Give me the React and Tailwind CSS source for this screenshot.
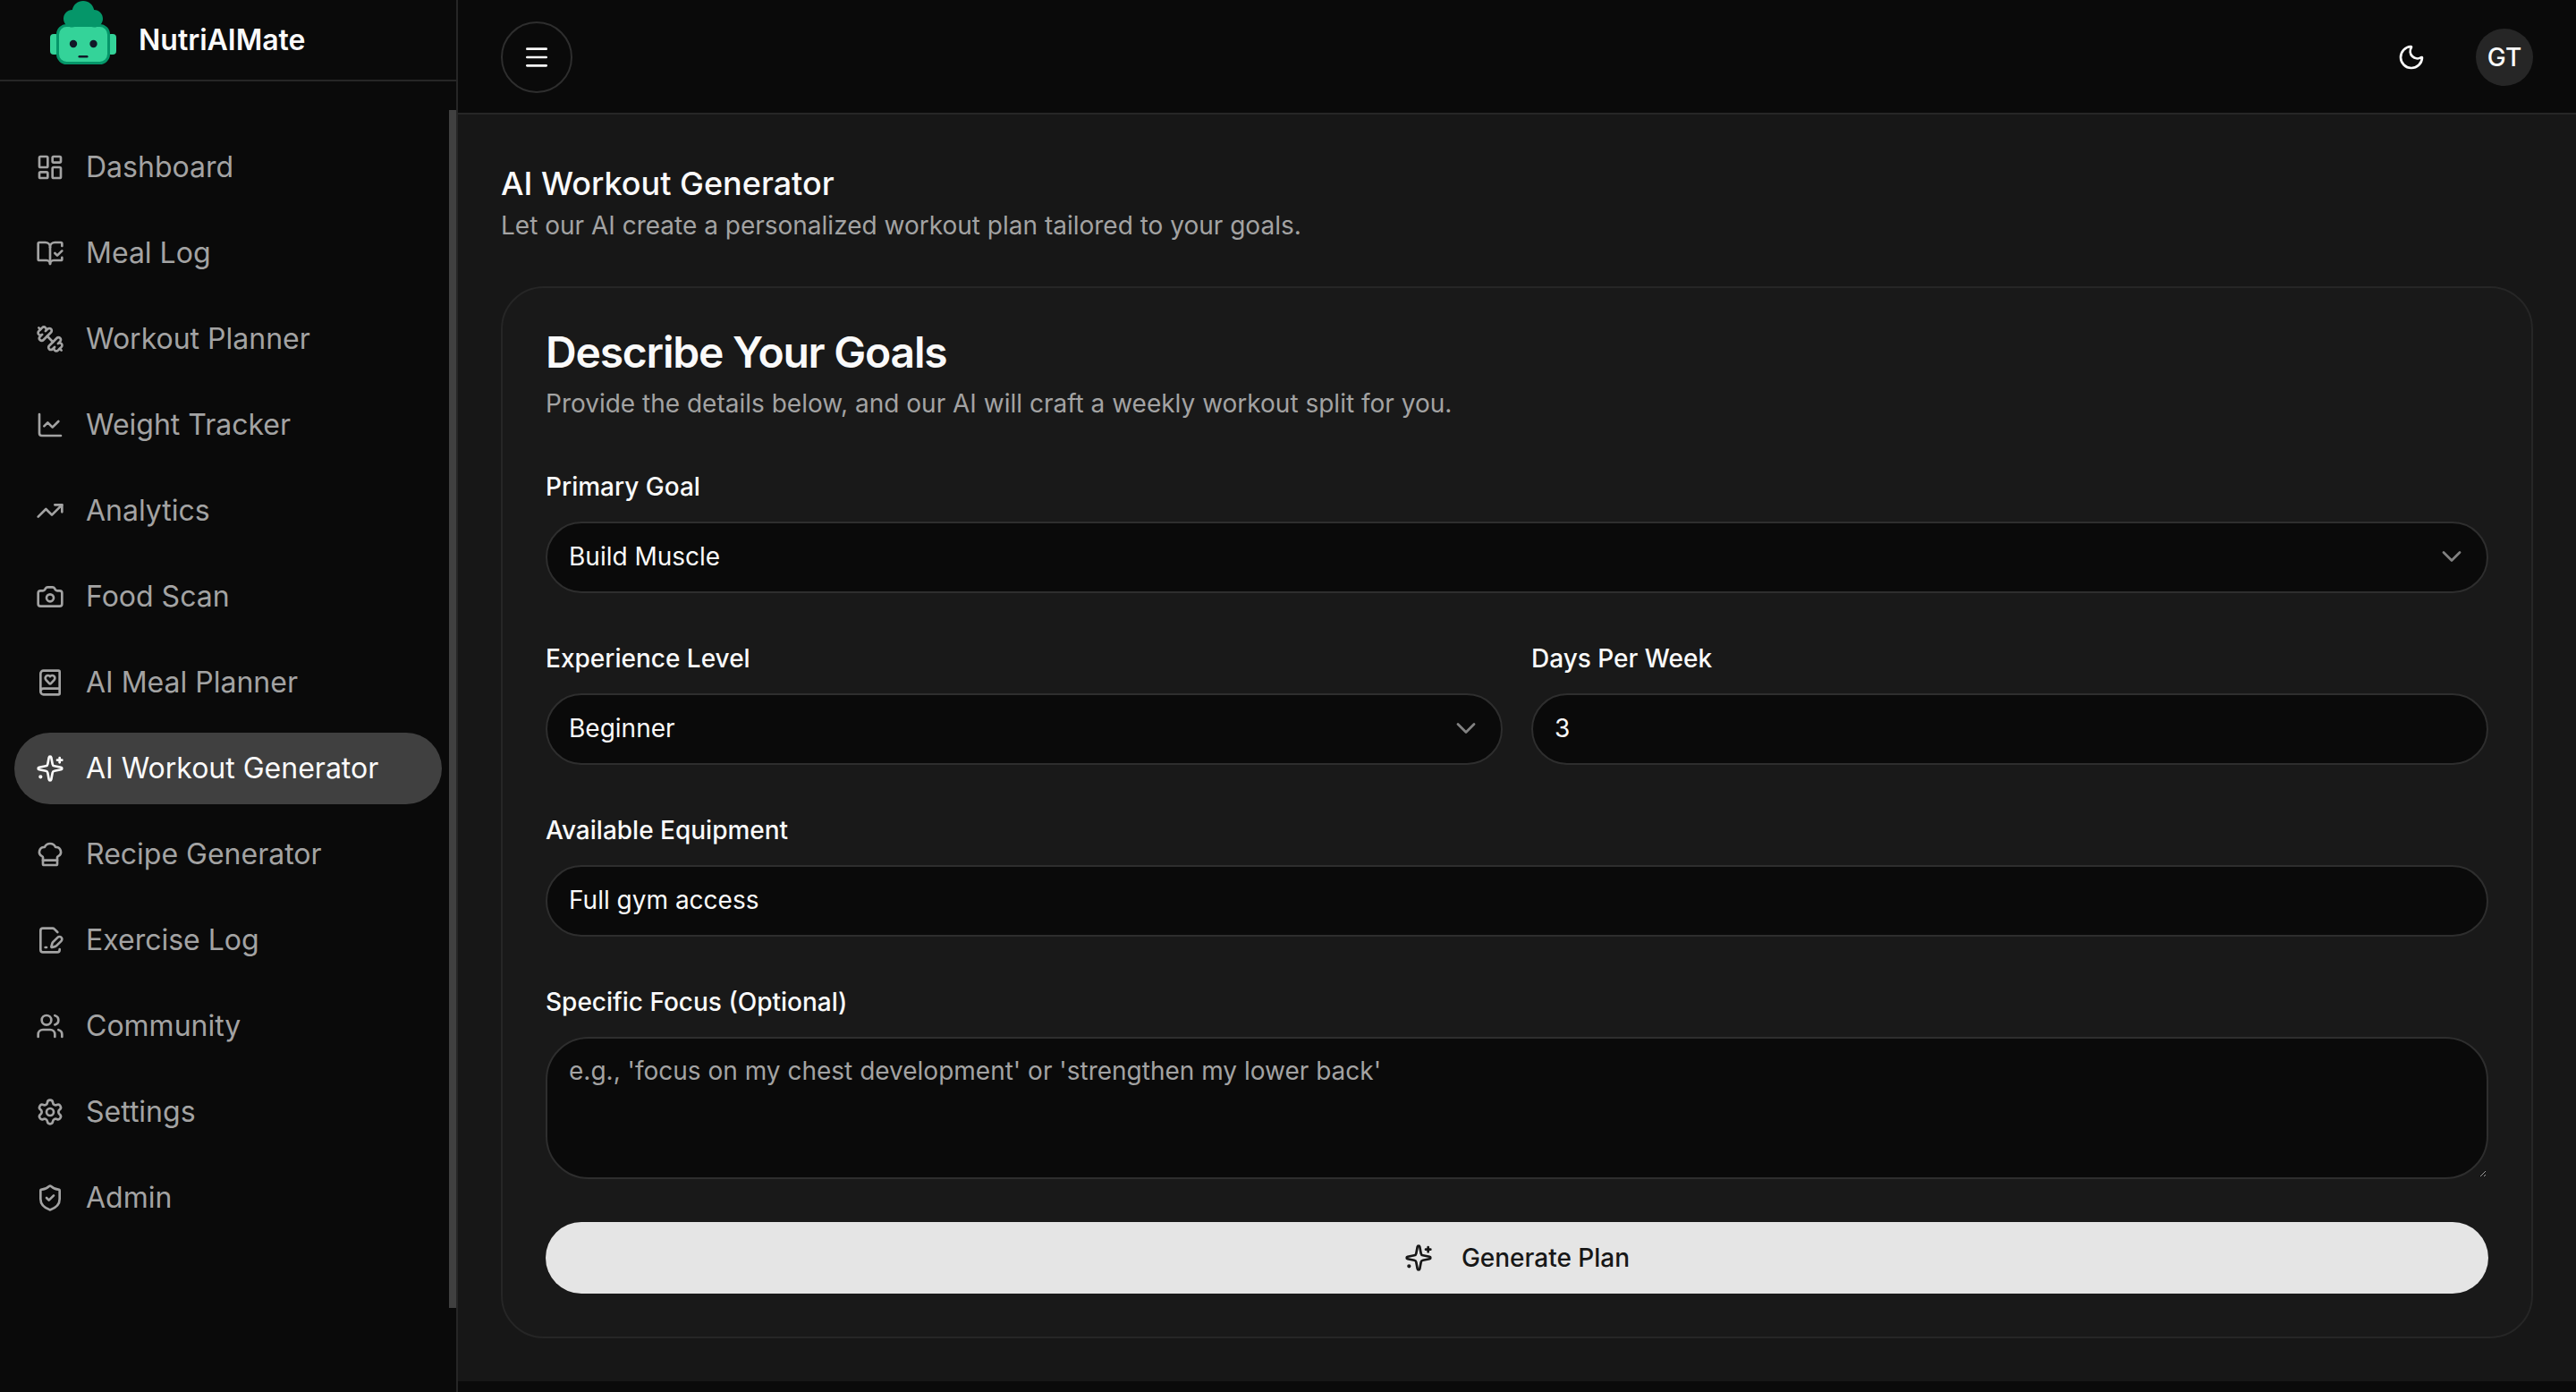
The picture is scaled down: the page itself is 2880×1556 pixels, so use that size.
import {
  LayoutDashboard,
  BookOpenCheck,
  ChartLine,
  TrendingUp,
  Camera,
  BookHeart,
  ChefHat,
  FilePenLine,
  Users,
  Settings,
  ShieldCheck,
  Menu,
  Moon,
  ChevronDown,
} from 'lucide-react'

// the diagonal runs the other way in this version of the icon
function DumbbellIcon({ size = 32 }) {
  return (
    <svg
      width={size}
      height={size}
      viewBox="0 0 24 24"
      fill="none"
      stroke="currentColor"
      strokeWidth="2"
      strokeLinecap="round"
      strokeLinejoin="round"
    >
      <path d="M14.4 14.4 9.6 9.6" />
      <path d="M18.657 21.485a2 2 0 1 1-2.829-2.828l-1.767 1.768a2 2 0 1 1-2.829-2.829l6.364-6.364a2 2 0 1 1 2.829 2.829l-1.768 1.767a2 2 0 1 1 2.828 2.829z" />
      <path d="m21.5 21.5-1.4-1.4" />
      <path d="M3.9 3.9 2.5 2.5" />
      <path d="M6.404 12.768a2 2 0 1 1-2.829-2.829l1.768-1.767a2 2 0 1 1-2.828-2.829l2.828-2.828a2 2 0 1 1 2.829 2.828l1.767-1.768a2 2 0 1 1 2.829 2.829z" />
    </svg>
  )
}

// star with a plus and a small solid dot
function SparklesIcon({ size = 32 }) {
  return (
    <svg
      width={size}
      height={size}
      viewBox="0 0 24 24"
      fill="none"
      stroke="currentColor"
      strokeWidth="2"
      strokeLinecap="round"
      strokeLinejoin="round"
    >
      <path d="M11.017 2.814a1 1 0 0 1 1.966 0l1.051 5.558a2 2 0 0 0 1.594 1.594l5.558 1.051a1 1 0 0 1 0 1.966l-5.558 1.051a2 2 0 0 0-1.594 1.594l-1.051 5.558a1 1 0 0 1-1.966 0l-1.051-5.558a2 2 0 0 0-1.594-1.594l-5.558-1.051a1 1 0 0 1 0-1.966l5.558-1.051a2 2 0 0 0 1.594-1.594z" />
      <path d="M20 3v4" />
      <path d="M22 5h-4" />
      <circle cx="4" cy="19" r="0.6" fill="currentColor" />
    </svg>
  )
}

const navItems = [
  { icon: LayoutDashboard, label: 'Dashboard' },
  { icon: BookOpenCheck, label: 'Meal Log' },
  { icon: DumbbellIcon, label: 'Workout Planner' },
  { icon: ChartLine, label: 'Weight Tracker' },
  { icon: TrendingUp, label: 'Analytics' },
  { icon: Camera, label: 'Food Scan' },
  { icon: BookHeart, label: 'AI Meal Planner' },
  { icon: SparklesIcon, label: 'AI Workout Generator', active: true },
  { icon: ChefHat, label: 'Recipe Generator' },
  { icon: FilePenLine, label: 'Exercise Log' },
  { icon: Users, label: 'Community' },
  { icon: Settings, label: 'Settings' },
  { icon: ShieldCheck, label: 'Admin' },
]

function Logo() {
  return (
    <svg width="80" height="76" viewBox="0 0 80 76" className="shrink-0">
      <rect x="3" y="38" width="10" height="23" rx="4" fill="#34d399" />
      <rect x="67" y="38" width="10" height="23" rx="4" fill="#34d399" />
      <rect x="11.5" y="28.5" width="57" height="42" rx="10" fill="#34d399" stroke="#059669" strokeWidth="3" />
      <circle cx="29" cy="49" r="4.2" fill="#111827" />
      <circle cx="51.5" cy="49" r="4.2" fill="#111827" />
      <rect x="34.5" y="62" width="11" height="2.4" rx="1.2" fill="#111827" />
      <path
        d="M28 30.5c-5.5 0-10-4.2-10-9.6 0-5.600 4.200-9.800 9.800-10C29.300 4.800 34 1 40 1s10.700 3.800 12.200 9.900c5.600.2 9.800 4.400 9.800 10 0 5.400-4.500 9.600-10 9.600-4 0-6-3.500-12-3.500s-8 3.500-12 3.500z"
        fill="#059669"
      />
    </svg>
  )
}

function Sidebar() {
  return (
    <aside className="relative w-[512px] shrink-0 border-r-2 border-[#262626] bg-[#0a0a0a] flex flex-col">
      <div className="h-[91px] border-b-2 border-[#262626] flex items-start pl-[53px] gap-[22px]">
        <Logo />
        <span className="mt-[25px] text-[32px] leading-[40px] font-semibold text-[#fafafa]">NutriAIMate</span>
      </div>

      <nav className="flex-1 pt-[56px] pl-4 pr-4">
        <ul className="flex flex-col gap-4">
          {navItems.map((item) => (
            <li key={item.label}>
              <a
                className={`h-20 flex items-center gap-6 pl-6 rounded-full text-[32px] ${
                  item.active ? 'bg-[#404040] text-[#fafafa]' : 'text-[#a3a3a3]'
                }`}
              >
                <item.icon size={32} />
                <span>{item.label}</span>
              </a>
            </li>
          ))}
        </ul>
      </nav>

      {/* scrollbar thumb */}
      <div className="absolute right-0 top-[123px] w-2 h-[1339px] bg-[#404040]" />
    </aside>
  )
}

function Topbar() {
  return (
    <header className="h-[128px] shrink-0 border-b-2 border-[#262626] bg-[#0a0a0a] flex items-center justify-between px-12 pt-[2px]">
      <button className="w-20 h-20 rounded-full border-2 border-[#2e2e2e] flex items-center justify-center text-[#fafafa]">
        <Menu size={32} />
      </button>
      <div className="flex items-center gap-10">
        <button className="w-16 h-16 flex items-center justify-center text-[#fafafa]">
          <Moon size={32} />
        </button>
        <div className="w-16 h-16 rounded-full bg-[#262626] flex items-center justify-center text-[28px] font-medium text-[#fafafa]">
          GT
        </div>
      </div>
    </header>
  )
}

function Field({ label, children }) {
  return (
    <div className="flex flex-col gap-[17px]">
      <label className="text-[28px] leading-[44px] font-medium text-[#fafafa]">{label}</label>
      {children}
    </div>
  )
}

function SelectBox({ value }) {
  return (
    <button className="w-full h-20 rounded-full border-2 border-[#2e2e2e] bg-[#0a0a0a] pl-6 pr-[21px] pb-[2px] flex items-center justify-between text-[28px] text-[#fafafa]">
      <span>{value}</span>
      <ChevronDown size={36} strokeWidth={1.8} className="opacity-50" />
    </button>
  )
}

function TextInput({ value }) {
  return (
    <input
      readOnly
      value={value}
      className="w-full h-20 rounded-full border-2 border-[#2e2e2e] bg-[#0a0a0a] px-6 pb-[2px] text-[28px] text-[#fafafa] outline-none"
    />
  )
}

export default function App() {
  return (
    <div className="h-screen overflow-hidden flex bg-[#0a0a0a] [font-family:Inter,sans-serif]">
      <Sidebar />

      <div className="flex-1 min-w-0 flex flex-col">
        <Topbar />

        <main className="h-[1416px] shrink-0 bg-[#171717] px-12 pt-[54px]">
          <h1 className="text-[36px] leading-[46px] font-medium text-[#fafafa]">AI Workout Generator</h1>
          <p className="text-[28px] leading-[48px] text-[#a3a3a3]">
            Let our AI create a personalized workout plan tailored to your goals.
          </p>

          <section className="mt-[44px] rounded-[48px] border-2 border-[#262626] bg-[#191919] px-12 pt-[44px] pb-12">
            <h2 className="text-[48px] leading-[56px] font-semibold tracking-tight text-[#fafafa]">Describe Your Goals</h2>
            <p className="mt-[9px] text-[28px] leading-[40px] text-[#a3a3a3]">
              Provide the details below, and our AI will craft a weekly workout split for you.
            </p>

            <div className="mt-[51px] flex flex-col gap-[51px]">
              <Field label="Primary Goal">
                <SelectBox value="Build Muscle" />
              </Field>

              <div className="grid grid-cols-2 gap-8">
                <Field label="Experience Level">
                  <SelectBox value="Beginner" />
                </Field>
                <Field label="Days Per Week">
                  <TextInput value="3" />
                </Field>
              </div>

              <Field label="Available Equipment">
                <TextInput value="Full gym access" />
              </Field>

              <Field label="Specific Focus (Optional)">
                <textarea
                  readOnly
                  placeholder="e.g., 'focus on my chest development' or 'strengthen my lower back'"
                  className="block w-full h-[159px] rounded-[48px] border-2 border-[#2e2e2e] bg-[#0a0a0a] px-6 py-4 text-[28px] leading-[40px] text-[#fafafa] placeholder:text-[#a3a3a3] outline-none"
                />
              </Field>
            </div>

            <button className="mt-12 w-full h-20 rounded-full bg-[#e5e5e5] flex items-center justify-center gap-8 text-[28px] font-medium text-[#171717]">
              <SparklesIcon size={32} />
              Generate Plan
            </button>
          </section>
        </main>
      </div>
    </div>
  )
}
